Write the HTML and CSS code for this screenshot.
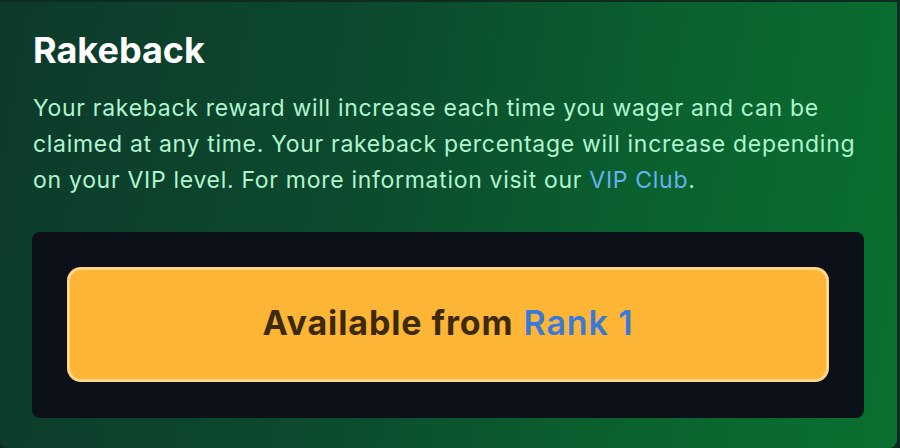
FILE: index.html
```html
<!DOCTYPE html>
<html>
<head>
<meta charset="utf-8">
<link rel="stylesheet" href="styles.css">
</head>
<body>
<div class="panel">
  <h1 class="title">Rakeback</h1>
  <p class="desc">Your rakeback reward will increase each time you wager and can be<br>claimed at any time. Your rakeback percentage will increase depending<br>on your VIP level. For more information visit our <a class="link" href="#">VIP Club</a>.</p>
  <div class="box">
    <div class="btn"><span class="btn-dark">Available from</span> <span class="btn-blue">Rank 1</span></div>
  </div>
</div>
</body>
</html>
```
FILE: styles.css
```css
html, body {
  margin: 0;
  padding: 0;
  background: #0f2a20;
  width: 900px;
  height: 448px;
  overflow: hidden;
}
.panel {
  box-sizing: border-box;
  margin-top: 2px;
  width: 897px;
  height: 446px;
  border-radius: 0 0 8px 8px;
  background: linear-gradient(100deg, #0d3a2b 0%, #0c4a2e 40%, #0a612f 70%, #0a7030 100%);
  padding: 26px 33px 0 32px;
  font-family: Inter, "Open Sans", sans-serif;
}
.title {
  margin: 0;
  font-size: 36px;
  font-weight: 700;
  color: #ffffff;
  line-height: 44px;
  padding-left: 1px;
}
.desc {
  margin: 18px 0 0 0;
  padding-left: 1px;
  font-size: 23px;
  letter-spacing: 0.7px;
  line-height: 36px;
  color: #b0f5cf;
  white-space: nowrap;
}
.link {
  color: #63b3f0;
  text-decoration: none;
}
.box {
  margin-top: 34px;
  width: 832px;
  height: 186px;
  box-sizing: border-box;
  background: #0c1019;
  border-radius: 8px;
  padding: 35px 35px 0 35px;
}
.btn {
  box-sizing: border-box;
  width: 762px;
  height: 115px;
  background: #fdb535;
  border: 3px solid #ffd68a;
  border-radius: 14px;
  display: flex;
  align-items: center;
  justify-content: center;
  font-size: 34px;
  letter-spacing: 0.9px;
  font-weight: 700;
  gap: 10px;
  padding-bottom: 5px;
}
.btn-dark { color: #3d2a0c; }
.btn-blue { color: #3a79da; font-weight: 600; }
```
